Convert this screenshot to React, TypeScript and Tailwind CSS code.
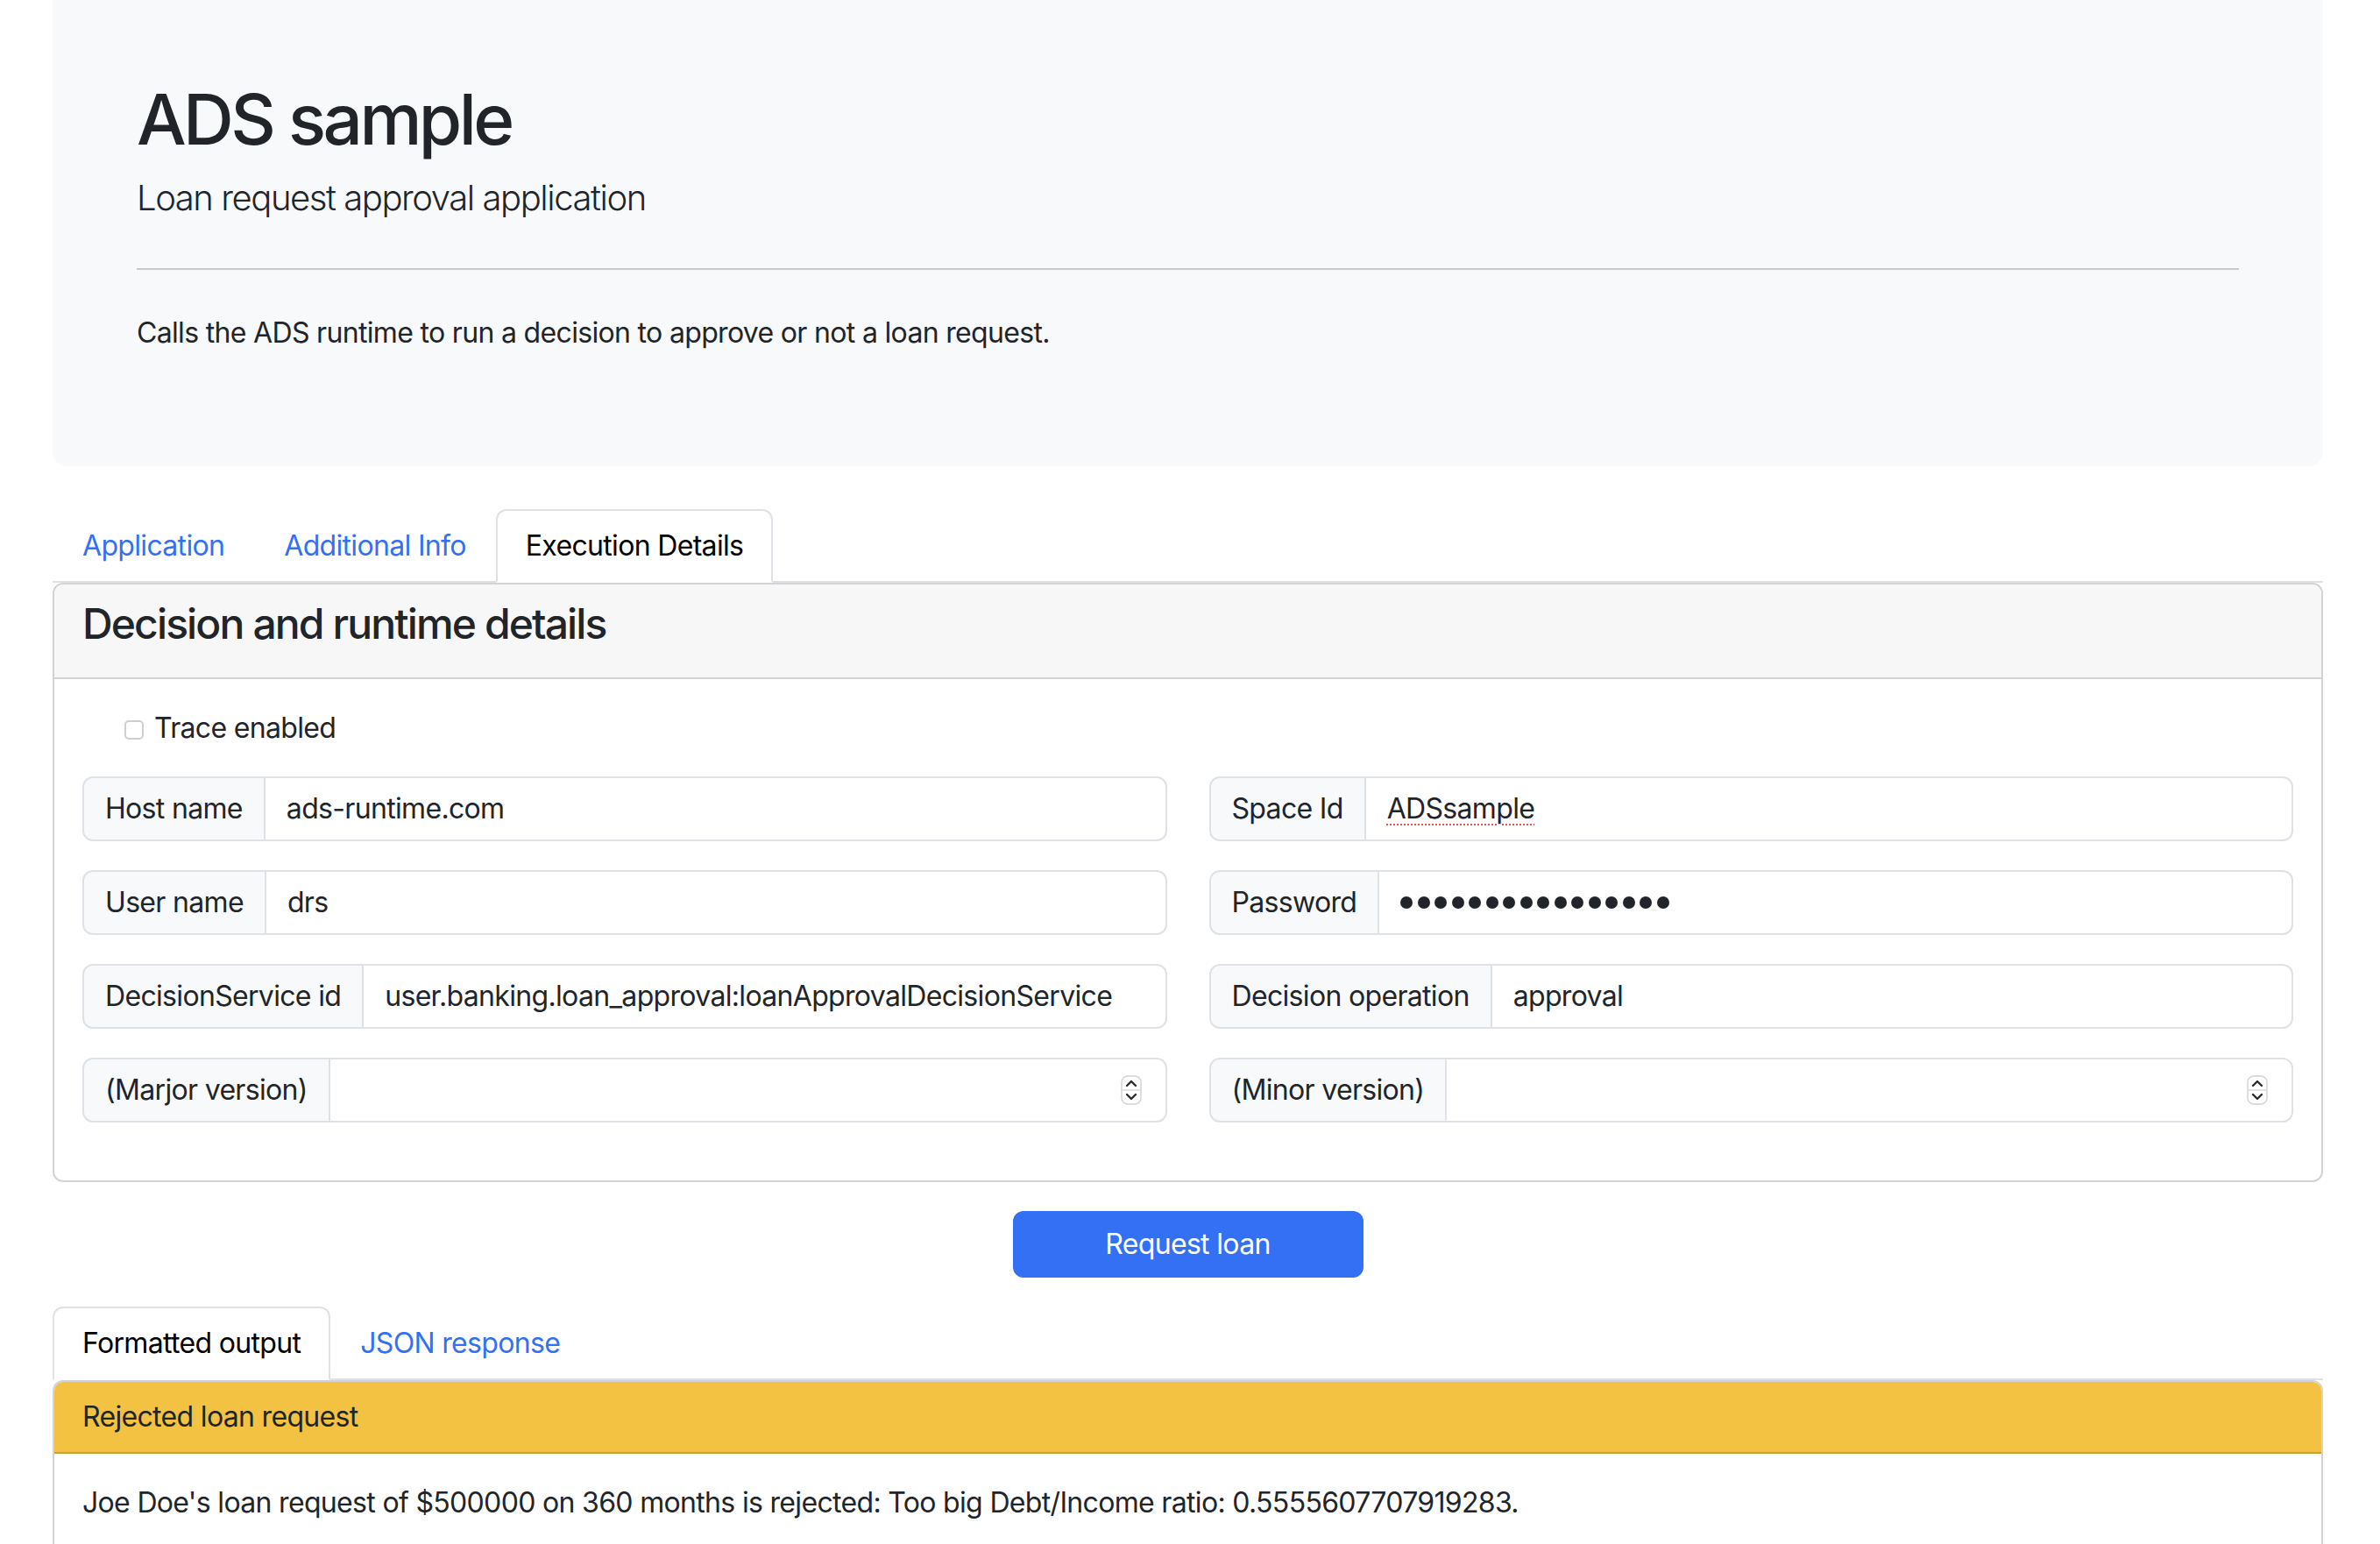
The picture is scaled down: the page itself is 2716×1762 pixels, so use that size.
const blue = "#3470f4";

function Stepper() {
  return (
    <svg width="24" height="34" viewBox="0 0 24 34">
      <rect x="1" y="1" width="22" height="32" rx="7" fill="#fff" stroke="#d4d4d4" strokeWidth="1.5" />
      <line x1="1" y1="17" x2="23" y2="17" stroke="#dadada" strokeWidth="1.5" />
      <path d="M7 12 L12 7 L17 12" fill="none" stroke="#2b2b2b" strokeWidth="2.4" strokeLinecap="round" strokeLinejoin="round" />
      <path d="M7 22 L12 27 L17 22" fill="none" stroke="#2b2b2b" strokeWidth="2.4" strokeLinecap="round" strokeLinejoin="round" />
    </svg>
  );
}

function Field({ label, children, number }: { label: string; children?: React.ReactNode; number?: boolean }) {
  return (
    <div className="flex h-[74px]">
      <span className="flex items-center whitespace-nowrap rounded-l-[12px] border-2 border-[#dee2e6] bg-[#f8f9fa] px-[24px] leading-[48px]">
        {label}
      </span>
      <div
        className={
          number
            ? "flex flex-1 items-center justify-end rounded-r-[12px] border-2 border-l-0 border-[#dee2e6] bg-white pr-[27px]"
            : "flex flex-1 items-center rounded-r-[12px] border-2 border-l-0 border-[#dee2e6] bg-white px-[24px] leading-[48px]"
        }
      >
        {number ? <Stepper /> : children}
      </div>
    </div>
  );
}

function Tab({ label, active }: { label: string; active?: boolean }) {
  return (
    <li
      className={
        active
          ? "-mb-[2px] rounded-t-[12px] border-2 border-[#dee2e6] border-b-white bg-white px-[32px] py-[16px] leading-[48px] text-black"
          : "-mb-[2px] border-2 border-transparent px-[32px] py-[16px] leading-[48px]"
      }
      style={active ? undefined : { color: blue }}
    >
      {label}
    </li>
  );
}

export default function App() {
  return (
    <div className="relative h-[1762px] overflow-hidden bg-white font-['Inter',sans-serif] text-[32px] leading-[48px] tracking-[-0.021em] text-[#212529]">
      <div className="pl-[60px] pr-[65px]">
        <div className="rounded-b-[16px] bg-[#f8f9fa] px-[96px] pt-[88px] pb-[96px]">
          <h1 className="mb-[12px] text-[80px] font-medium leading-[1.2] tracking-[-0.045em]">ADS sample</h1>
          <p className="text-[40px] font-light leading-[1.5] tracking-[-0.036em]">Loan request approval application</p>
          <hr className="mt-[50px] mb-[48px] border-t-2 border-[#c8c9ca]" />
          <p className="mb-[32px]">Calls the ADS runtime to run a decision to approve or not a loan request.</p>
        </div>

        <ul className="mt-[49px] flex border-b-2 border-[#dee2e6]">
          <Tab label="Application" />
          <Tab label="Additional Info" />
          <Tab label="Execution Details" active />
        </ul>

        <div className="rounded-[12px] border-2 border-[#d3d3d3]">
          <div className="rounded-t-[10px] border-b-2 border-[#d3d3d3] bg-[#f7f7f7] px-[32px] py-[16px]">
            <h4 className="mb-[16px] text-[48px] font-medium leading-[1.2] tracking-[-0.039em]">
              Decision and runtime details
            </h4>
          </div>
          <div className="px-[32px] pt-[32px] pb-[66px]">
            <label className="mb-[31px] flex h-[48px] items-center gap-[12px] pl-[48px]">
              <span className="mt-[4px] h-[22px] w-[22px] rounded-[5px] border-2 border-[#cfcfcf] bg-white" />
              Trace enabled
            </label>
            <div className="grid grid-cols-2 gap-x-[48px] gap-y-[33px]">
              <Field label="Host name">ads-runtime.com</Field>
              <Field label="Space Id">
                <span className="underline decoration-[#e5534b] decoration-dotted decoration-2 underline-offset-[7px]">
                  ADSsample
                </span>
              </Field>
              <Field label="User name">drs</Field>
              <Field label="Password">
                <div className="flex gap-[5.5px]">
                  {Array.from({ length: 16 }).map((_, i) => (
                    <span key={i} className="h-[14px] w-[14px] rounded-full bg-[#212529]" />
                  ))}
                </div>
              </Field>
              <Field label="DecisionService id">user.banking.loan_approval:loanApprovalDecisionService</Field>
              <Field label="Decision operation">approval</Field>
              <Field label="(Marjor version)" number />
              <Field label="(Minor version)" number />
            </div>
          </div>
        </div>

        <div className="mt-[33px] flex justify-center">
          <button className="h-[76px] w-[400px] rounded-[12px] text-white" style={{ backgroundColor: blue }}>
            Request loan
          </button>
        </div>

        <ul className="mt-[33px] flex border-b-2 border-[#dee2e6]">
          <Tab label="Formatted output" active />
          <Tab label="JSON response" />
        </ul>

        <div className="rounded-[12px] border-2 border-[#d3d3d3]">
          <div className="rounded-t-[10px] border-b-2 border-[#c8a038] bg-[#f3c243] px-[32px] py-[16px]">
            Rejected loan request
          </div>
          <div className="p-[32px]">
            Joe Doe's loan request of $500000 on 360 months is rejected: Too big Debt/Income ratio: 0.5555607707919283.
          </div>
        </div>
      </div>
    </div>
  );
}
